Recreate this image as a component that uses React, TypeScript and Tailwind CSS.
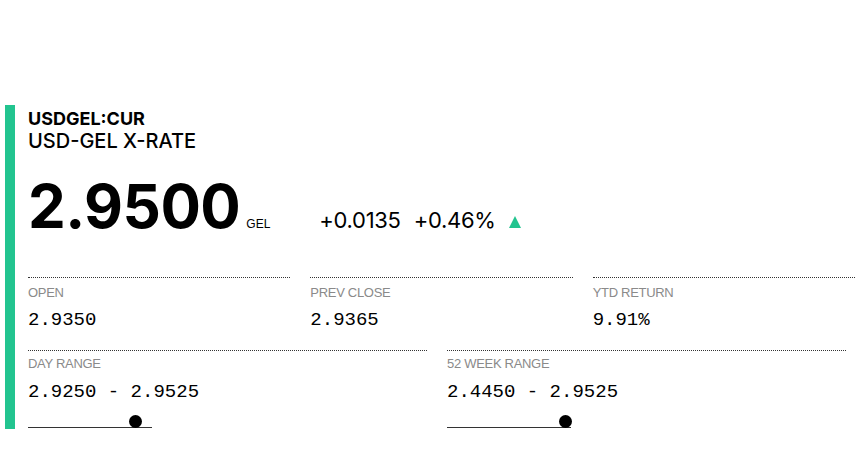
import React from "react";

const mono = { fontFamily: '"Liberation Mono", monospace' };

function Stat({ label, value }: { label: string; value: string }) {
  return (
    <div className="flex flex-col">
      <div className="border-t border-dotted border-[#333]" />
      <div className="mt-[8px] text-[13px] leading-[13px] text-[#8a8a8a] tracking-[-0.3px]" style={{ fontFamily: '"Liberation Sans", Arial, sans-serif' }}>{label}</div>
      <div className="mt-[12px] text-[19px] leading-[19px] text-black" style={mono}>{value}</div>
    </div>
  );
}

function Range({ label, value, pos }: { label: string; value: string; pos: number }) {
  return (
    <div className="flex flex-col">
      <div className="border-t border-dotted border-[#333]" />
      <div className="mt-[6px] text-[13px] leading-[13px] text-[#8a8a8a] tracking-[-0.3px]" style={{ fontFamily: '"Liberation Sans", Arial, sans-serif' }}>{label}</div>
      <div className="mt-[13px] text-[19px] leading-[19px] text-black" style={mono}>{value}</div>
      <div className="relative mt-[14px] h-[12px] w-[124px]">
        <div className="absolute bottom-0 left-0 h-[1.5px] w-full bg-[#333]" />
        <div className="absolute bottom-0 h-[13px] w-[13px] rounded-full bg-black" style={{ left: pos }} />
      </div>
    </div>
  );
}

export default function App() {
  return (
    <div className="h-[457px] w-[862px] bg-white pt-[105px]" style={{ fontFamily: 'Inter, "Liberation Sans", sans-serif' }}>
      <div className="ml-[5px] flex border-l-[10px] border-[#22c48f] pb-[1px]">
        <div className="pl-[13px] pt-[3px]">
          <div className="text-[18px] font-bold leading-[22px] text-black">USDGEL:CUR</div>
          <div className="text-[20px] font-medium leading-[22px] text-black">USD-GEL X-RATE</div>
          <div className="mt-[24px] flex items-baseline">
            <div className="text-[60px] font-bold leading-[60px] tracking-[-0.5px] text-black">2.9500</div>
            <div className="ml-[6px] text-[12px] text-black" style={{ fontFamily: '"Liberation Sans", Arial, sans-serif' }}>GEL</div>
            <div className="ml-[49px] text-[22px] tracking-[-0.3px] text-black">+0.0135</div>
            <div className="ml-[13px] text-[22px] tracking-[-0.3px] text-black">+0.46%</div>
            <svg className="ml-[13px]" width="12" height="12" viewBox="0 0 12 12">
              <polygon points="6,0 12,12 0,12" fill="#22c48f" />
            </svg>
          </div>
          <div className="mt-[40px] grid w-[827px] grid-cols-3 gap-x-[20px]">
            <Stat label="OPEN" value="2.9350" />
            <Stat label="PREV CLOSE" value="2.9365" />
            <Stat label="YTD RETURN" value="9.91%" />
          </div>
          <div className="mt-[20px] grid w-[818px] grid-cols-2 gap-x-[20px]">
            <Range label="DAY RANGE" value="2.9250 - 2.9525" pos={101} />
            <Range label="52 WEEK RANGE" value="2.4450 - 2.9525" pos={112} />
          </div>
        </div>
      </div>
    </div>
  );
}
